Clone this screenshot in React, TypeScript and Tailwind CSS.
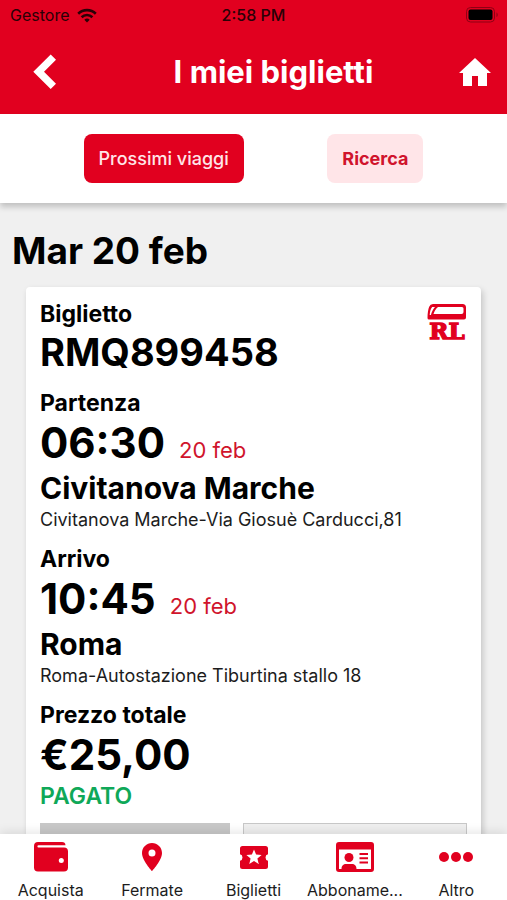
import { FC, ReactNode } from 'react';

interface IStopProps {
  label: string;
  time: string;
  date: string;
  city: string;
  address: string;
}

interface INavItemProps {
  label: string;
  icon: ReactNode;
}

const Stop: FC<IStopProps> = ({ label, time, date, city, address }) => {
  return (
    <div className="mb-[13px]">
      <h3 className="text-[23px] leading-7 font-bold">{label}</h3>
      <p className="flex items-baseline gap-3.5 leading-[52px]">
        <span className="text-[42px] font-bold">{time}</span>
        <span className="text-[22px] leading-none text-[#d0142c]">{date}</span>
      </p>
      <p className="text-[30px] leading-[38px] font-bold">{city}</p>
      <p className="text-[18px] leading-[25px] text-[#1c1c1c]">{address}</p>
    </div>
  );
};

const NavItem: FC<INavItemProps> = ({ label, icon }) => {
  return (
    <li className="min-w-0 flex-1">
      <a href="#" className="flex flex-col items-center">
        <span className="flex h-[46px] items-center text-[#e1001f]">{icon}</span>
        <span className="text-[16px] leading-5 text-[#1c1c1c]">{label}</span>
      </a>
    </li>
  );
};

const WalletIcon = () => (
  <svg width="36" height="32" viewBox="0 0 36 32" fill="currentColor">
    <path d="M5 1h24a3.500 3.500 0 0 1 3.500 3.300H5.500a1 1 0 0 0 0 2.200H31a4 4 0 0 1 4 4v16a4 4 0 0 1-4 4H5a4 4 0 0 1-4-4V5a4 4 0 0 1 4-4z" />
    <circle cx="28.300" cy="19.500" r="2.500" fill="#fff" />
  </svg>
);

const PinIcon = () => (
  <svg width="20" height="28" viewBox="0 0 20 28" fill="currentColor">
    <path
      fillRule="evenodd"
      d="M10 0C4.500 0 0 4.400 0 9.900 0 17.300 10 28 10 28s10-10.700 10-18.100C20 4.400 15.500 0 10 0zm0 13.400a3.500 3.500 0 1 1 0-7 3.500 3.500 0 0 1 0 7z"
    />
  </svg>
);

const TicketIcon = () => (
  <svg width="28" height="23" viewBox="0 0 28 23" fill="currentColor">
    <path
      fillRule="evenodd"
      d="M2.500 0h23A2.500 2.500 0 0 1 28 2.500v5.800a3.300 3.300 0 0 0 0 6.400v5.800a2.500 2.500 0 0 1-2.500 2.500h-23A2.500 2.500 0 0 1 0 20.500v-5.800a3.300 3.300 0 0 0 0-6.400V2.500A2.500 2.500 0 0 1 2.500 0zM14 3.500l-2.100 5.100-5.500.4 4.200 3.600-1.300 5.400 4.700-2.900 4.700 2.900-1.300-5.400 4.200-3.600-5.500-.4z"
    />
  </svg>
);

const CardIcon = () => (
  <svg width="38" height="30" viewBox="0 0 38 30" fill="currentColor">
    <path
      fillRule="evenodd"
      d="M3 0h32a3 3 0 0 1 3 3v24a3 3 0 0 1-3 3H3a3 3 0 0 1-3-3V3a3 3 0 0 1 3-3zM3 7.500V27h2.500c0-3.500 2-5 4.500-5h6c2.500 0 4.500 1.500 4.500 5H35V7.500z"
    />
    <circle cx="13" cy="15.500" r="4.500" />
    <path d="M23.500 11h8.500v2h-8.500zM23.500 15.200h8.500v2h-8.500zM23.500 19.400h8.500v2h-8.500z" />
  </svg>
);

const DotsIcon = () => (
  <svg width="34" height="10" viewBox="0 0 34 10" fill="currentColor">
    <circle cx="5" cy="5" r="5" />
    <circle cx="17" cy="5" r="5" />
    <circle cx="29" cy="5" r="5" />
  </svg>
);

const WifiIcon = () => (
  <svg width="20" height="15" viewBox="0 0 20 15" fill="none" stroke="currentColor" strokeWidth="2.600">
    <path d="M1.200 5.700a12.600 12.600 0 0 1 17.600 0" />
    <path d="M4.600 9.200a7.700 7.700 0 0 1 10.800 0" />
    <path d="M10 14.500l-2.700-2.800a3.900 3.900 0 0 1 5.400 0z" fill="currentColor" stroke="none" />
  </svg>
);

const BatteryIcon = () => (
  <svg width="33" height="16" viewBox="0 0 33 16">
    <rect x="0.500" y="0.500" width="28" height="14.500" rx="4" fill="none" stroke="#8f0014" />
    <rect x="2.500" y="2.500" width="24" height="10.500" rx="2" fill="#000" />
    <path d="M30.500 5.500c1.600.6 1.600 4 0 4.600z" fill="#8f0014" />
  </svg>
);

const OperatorLogo = () => (
  <svg
    className="overflow-visible"
    width="40"
    height="40"
    viewBox="0 0 40 40"
    fill="#e1001f"
    role="img"
    aria-label="RL"
  >
    <path
      fillRule="evenodd"
      d="M6 0h29.500A3.500 3.500 0 0 1 39 3.500V13.500a2 2 0 0 1-2 2H2A1.500 1.500 0 0 1 .5 14C.5 9 1.200 5.300 2.200 2.800A4.300 4.300 0 0 1 6 0zM5.200 3C3.600 4.500 3 7.500 2.700 11h1.200C4.700 8 6 5.200 8 3zM11 3C8.500 5 7.500 7.300 6.500 10H34.500a2 2 0 0 0 2-2V4.500A1.500 1.500 0 0 0 35 3z"
    />
    <text
      x="20"
      y="35"
      textAnchor="middle"
      fontFamily="DejaVu Serif"
      fontWeight="700"
      fontSize="23"
      stroke="#e1001f"
      strokeWidth="1.400"
    >
      RL
    </text>
  </svg>
);

const navItems: INavItemProps[] = [
  { label: 'Acquista', icon: <WalletIcon /> },
  { label: 'Fermate', icon: <PinIcon /> },
  { label: 'Biglietti', icon: <TicketIcon /> },
  { label: 'Abboname...', icon: <CardIcon /> },
  { label: 'Altro', icon: <DotsIcon /> },
];

const stops: IStopProps[] = [
  {
    label: 'Partenza',
    time: '06:30',
    date: '20 feb',
    city: 'Civitanova Marche',
    address: 'Civitanova Marche-Via Giosuè Carducci,81',
  },
  {
    label: 'Arrivo',
    time: '10:45',
    date: '20 feb',
    city: 'Roma',
    address: 'Roma-Autostazione Tiburtina stallo 18',
  },
];

export default function App() {
  return (
    <div className="flex h-screen flex-col bg-[#f0f0f0] font-['Inter',sans-serif] text-black">
      <header className="bg-[#e1001f]">
        <div className="grid h-[30px] grid-cols-3 items-center px-2 text-[16px] text-[#2a0006]">
          <div className="flex items-center gap-2 pl-0.5">
            <span>Gestore</span>
            <WifiIcon />
          </div>
          <span className="text-center font-medium">2:58 PM</span>
          <span className="justify-self-end">
            <BatteryIcon />
          </span>
        </div>
        <div className="flex h-[84px] items-center justify-between pr-4 pl-8 text-white">
          <button type="button" aria-label="Indietro" className="w-14">
            <svg width="25" height="36" viewBox="0 0 25 36" fill="currentColor">
              <path d="M18.700 0.500L24 5.800 12 17.800 24 29.800 18.700 35.100 1.300 17.800z" />
            </svg>
          </button>
          <h1 className="text-[31px] font-bold">I miei biglietti</h1>
          <a href="#" aria-label="Home">
            <svg width="32" height="28" viewBox="0 0 32 28" fill="currentColor">
              <path d="M16 0l16 15h-4v13h-9V18h-6v10H4V15H0z" />
            </svg>
          </a>
        </div>
      </header>

      <div className="z-10 flex justify-evenly bg-white py-5 text-[18px] shadow-[0_4px_6px_rgba(0,0,0,0.2)]">
        <button type="button" className="h-[49px] rounded-lg bg-[#e1001f] px-[15px] font-medium text-[#ffe5e8]">
          Prossimi viaggi
        </button>
        <button type="button" className="h-[49px] rounded-lg bg-[#ffe5e8] px-[15px] font-bold text-[#d0142c]">
          Ricerca
        </button>
      </div>

      <main className="min-h-0 flex-1 overflow-hidden">
        <h2 className="px-3 pt-6 pb-3 text-[37px] leading-[48px] font-bold">Mar 20 feb</h2>
        <article className="mx-[26px] rounded-sm bg-white px-3.5 pt-[13px] pb-4 shadow-[2px_3px_6px_rgba(0,0,0,0.18)]">
          <div className="mb-[13px] flex items-start justify-between">
            <div>
              <h3 className="text-[23px] leading-7 font-bold">Biglietto</h3>
              <p className="text-[38px] leading-[48px] font-bold">RMQ899458</p>
            </div>
            <div className="pt-1">
              <OperatorLogo />
            </div>
          </div>
          {stops.map((stop) => (
            <Stop key={stop.label} {...stop} />
          ))}
          <h3 className="text-[23px] leading-7 font-bold">Prezzo totale</h3>
          <p className="text-[42px] leading-[52px] font-bold">€25,00</p>
          <p className="text-[23px] leading-[30px] font-semibold text-[#0fa858]">PAGATO</p>
          <div className="mt-3 flex gap-[13px]">
            <button type="button" aria-label="Modifica" className="h-12 w-[190px] bg-[#c8c8c8]" />
            <button
              type="button"
              aria-label="Dettagli"
              className="h-12 flex-1 border border-[#c8c8c8] bg-[#efefef]"
            />
          </div>
        </article>
      </main>

      <nav className="z-10 bg-white shadow-[0_-2px_10px_rgba(0,0,0,0.1)]">
        <ul className="flex">
          {navItems.map((item) => (
            <NavItem key={item.label} {...item} />
          ))}
        </ul>
      </nav>
    </div>
  );
}
